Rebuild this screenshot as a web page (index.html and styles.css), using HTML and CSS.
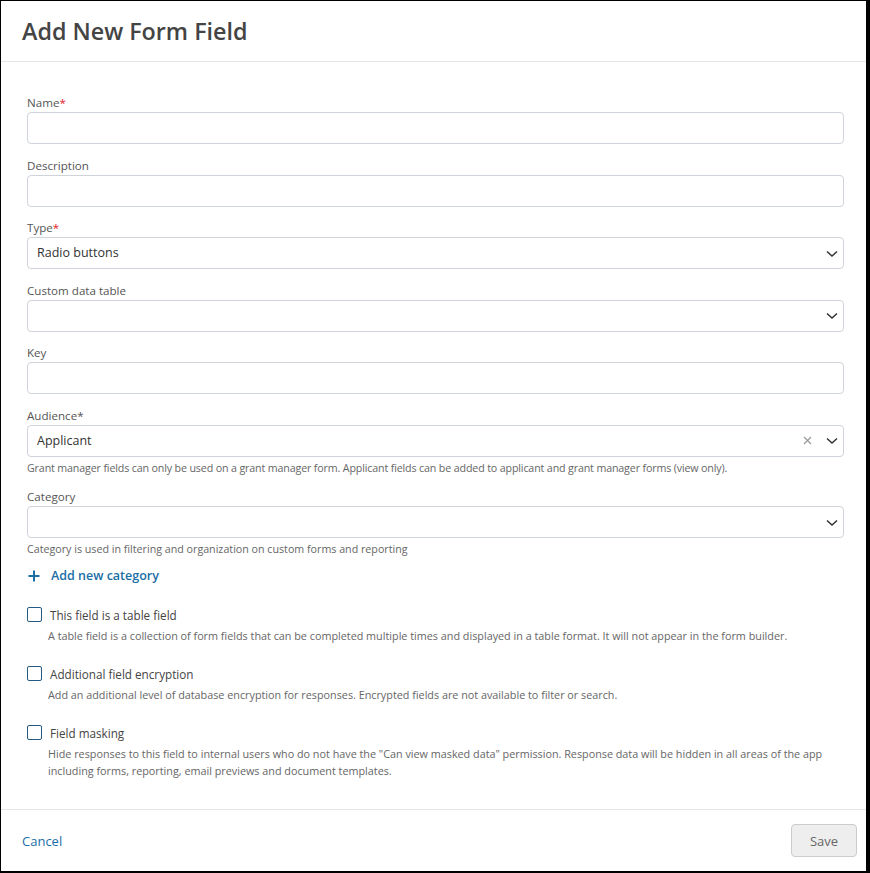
FILE: index.html
```html
<!DOCTYPE html>
<html lang="en">
<head>
<meta charset="utf-8">
<title>Add New Form Field</title>
<link rel="stylesheet" href="styles.css">
</head>
<body>
<div class="modal">
  <header class="modal-header">
    <h1 class="title">Add New Form Field</h1>
  </header>
  <main class="modal-body">
    <div class="group">
      <label class="label">Name<span class="req">*</span></label>
      <div class="input"></div>
    </div>
    <div class="group">
      <label class="label">Description</label>
      <div class="input"></div>
    </div>
    <div class="group">
      <label class="label">Type<span class="req">*</span></label>
      <div class="input select">
        <span class="value">Radio buttons</span>
        <svg class="chev" width="12" height="8" viewBox="0 0 12 8"><polyline points="1,1.5 6,6 11,1.5" fill="none" stroke="#333" stroke-width="1.5"/></svg>
      </div>
    </div>
    <div class="group">
      <label class="label">Custom data table</label>
      <div class="input select">
        <span class="value"></span>
        <svg class="chev" width="12" height="8" viewBox="0 0 12 8"><polyline points="1,1.5 6,6 11,1.5" fill="none" stroke="#333" stroke-width="1.5"/></svg>
      </div>
    </div>
    <div class="group">
      <label class="label">Key</label>
      <div class="input"></div>
    </div>
    <div class="group">
      <label class="label">Audience*</label>
      <div class="input select">
        <span class="value">Applicant</span>
        <svg class="clear" width="9" height="9" viewBox="0 0 9 9"><path d="M1 1 L8 8 M8 1 L1 8" stroke="#999" stroke-width="1.2"/></svg>
        <svg class="chev" width="12" height="8" viewBox="0 0 12 8"><polyline points="1,1.5 6,6 11,1.5" fill="none" stroke="#333" stroke-width="1.5"/></svg>
      </div>
      <p class="help help-tight">Grant manager fields can only be used on a grant manager form. Applicant fields can be added to applicant and grant manager forms (view only).</p>
    </div>
    <div class="group">
      <label class="label">Category</label>
      <div class="input select">
        <span class="value"></span>
        <svg class="chev" width="12" height="8" viewBox="0 0 12 8"><polyline points="1,1.5 6,6 11,1.5" fill="none" stroke="#333" stroke-width="1.5"/></svg>
      </div>
      <p class="help">Category is used in filtering and organization on custom forms and reporting</p>
    </div>
    <a class="add-link" href="#">
      <svg class="plus" width="12" height="12" viewBox="0 0 12 12"><path d="M6 0.5 V11.5 M0.5 6 H11.5" stroke="#1b6ea6" stroke-width="2"/></svg>
      <span>Add new category</span>
    </a>
    <div class="check">
      <div class="check-row"><span class="box"></span><span class="check-label">This field is a table field</span></div>
      <p class="check-desc">A table field is a collection of form fields that can be completed multiple times and displayed in a table format. It will not appear in the form builder.</p>
    </div>
    <div class="check">
      <div class="check-row"><span class="box"></span><span class="check-label">Additional field encryption</span></div>
      <p class="check-desc">Add an additional level of database encryption for responses. Encrypted fields are not available to filter or search.</p>
    </div>
    <div class="check">
      <div class="check-row"><span class="box"></span><span class="check-label">Field masking</span></div>
      <p class="check-desc">Hide responses to this field to internal users who do not have the "Can view masked data" permission. Response data will be hidden in all areas of the app including forms, reporting, email previews and document templates.</p>
    </div>
  </main>
  <footer class="modal-footer">
    <a class="cancel" href="#">Cancel</a>
    <button class="save" type="button">Save</button>
  </footer>
</div>
</body>
</html>
```
FILE: styles.css
```css
* { box-sizing: border-box; }
html, body { margin: 0; padding: 0; background: #fff; }
body { font-family: "Open Sans", "Noto Sans", sans-serif; color: #444; }

.modal {
  width: 870px;
  height: 873px;
  border-style: solid;
  border-color: #000;
  border-width: 1px 4px 2px 1px;
  display: flex;
  flex-direction: column;
}

.modal-header {
  height: 61px;
  padding: 0 21px;
  display: flex;
  align-items: center;
  border-bottom: 1px solid #e6e6e6;
}
.title {
  margin: 0;
  font-size: 23.3px;
  font-weight: 600;
  color: #444;
}

.modal-body {
  flex: 1;
  padding: 32px 22px 28px 26px;
}

.group { margin-bottom: 12.5px; }
.label {
  display: block;
  font-size: 11.6px;
  line-height: 18px;
  color: #555;
  height: 18px;
}
.req { color: #e4202a; }

.input {
  height: 32px;
  border: 1px solid #cfd4da;
  border-radius: 4px;
  background: #fff;
}
.select {
  display: flex;
  align-items: center;
  padding: 0 5px 0 9px;
}
.value {
  flex: 1;
  font-size: 12.5px;
  color: #333;
  margin-top: -1px;
}
.clear { margin-right: 14px; }
.chev { margin-top: 1px; }

.help {
  margin: 3px 0 0;
  font-size: 10.7px;
  line-height: 16px;
  color: #666;
}
.help-tight { letter-spacing: -0.15px; }

.add-link {
  display: flex;
  align-items: center;
  height: 20px;
  margin-top: -4px;
  text-decoration: none;
  color: #1b6ea6;
  font-size: 12.5px;
  font-weight: 600;
}
.plus { margin: 0 11px 0 1px; }

.check { margin-top: 20px; }
.add-link + .check { margin-top: 19px; }
.check-row {
  display: flex;
  align-items: center;
  height: 20px;
}
.box {
  width: 15px;
  height: 15px;
  border: 1.5px solid #235b82;
  border-radius: 2px;
  margin-right: 8px;
}
.check-label {
  font-size: 11.7px;
  color: #444;
}
.check-desc {
  margin: 2px 0 0 21px;
  font-size: 10.8px;
  line-height: 17px;
  color: #666;
}

.modal-footer {
  height: 62px;
  border-top: 1px solid #e6e6e6;
  display: flex;
  align-items: center;
  justify-content: space-between;
  padding: 0 9px 0 21px;
}
.cancel {
  font-size: 13px;
  color: #1b6ea6;
  text-decoration: none;
}
.save {
  width: 66px;
  height: 33px;
  border: 1px solid #ccc;
  border-radius: 4px;
  background: #eee;
  color: #666;
  font-family: "Open Sans", "Noto Sans", sans-serif;
  font-size: 13px;
}
```
